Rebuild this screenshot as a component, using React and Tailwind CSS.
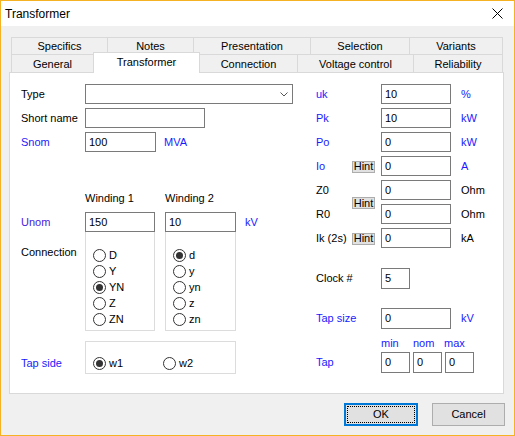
import React from 'react';

const BLUE = 'text-[#1a1aff]';

const Input = ({ value = '', className = '' }) => (
  <div className={`h-[20px] border border-[#7a7a7a] bg-white pl-[3px] flex items-center text-black ${className}`}>
    {value}
  </div>
);

const Radio = ({ label, checked = false, className = '' }) => (
  <div className={`flex items-center h-[16px] ${className}`}>
    <span className="w-[13px] h-[13px] rounded-full border border-[#333] bg-white flex items-center justify-center">
      {checked && <span className="w-[7px] h-[7px] rounded-full bg-[#333]" />}
    </span>
    <span className="ml-[3px]">{label}</span>
  </div>
);

const Hint = () => (
  <div className="w-[23px] h-[12px] bg-[#e1e1e1] border border-[#adadad] flex items-center justify-center text-[11px] leading-none text-black">
    Hint
  </div>
);

const RadioBox = ({ items, checked, className = '' }) => (
  <div className={`h-[99px] border-x border-b border-[#dcdcdc] pt-[15px] pl-[7px] ${className}`}>
    {items.map((it) => (
      <Radio key={it} label={it} checked={it === checked} />
    ))}
  </div>
);

const Tab = ({ label, className = '' }) => (
  <div className={`flex items-center justify-center border-t border-l border-[#d9d9d9] bg-[#f0f0f0] ${className}`}>
    {label}
  </div>
);

const Row = ({ label, labelClass = '', labelW = 'w-[65px]', className = '', children }) => (
  <div className={`flex items-center h-[20px] ${className}`}>
    <span className={`${labelW} ${labelClass}`}>{label}</span>
    {children}
  </div>
);

export default function App() {
  return (
    <div className="w-[515px] h-[436px] border border-[#f5b324] bg-[#f0f0f0] font-['Liberation_Sans',Arial,sans-serif] text-[11px] text-black overflow-hidden">
      {/* title bar */}
      <div className="h-[25px] bg-white flex items-center justify-between pl-[4px] pr-[11px]">
        <span className="text-[12px]">Transformer</span>
        <svg width="11" height="11" viewBox="0 0 11 11">
          <path d="M0.5 0.5 L10.5 10.5 M10.5 0.5 L0.5 10.5" stroke="#000" strokeWidth="1" />
        </svg>
      </div>

      {/* tabs */}
      <div className="ml-[10px] mt-[11px]">
        <div className="flex h-[17px]">
          <Tab label="Specifics" className="w-[96px]" />
          <Tab label="Notes" className="w-[86px]" />
          <Tab label="Presentation" className="w-[117px]" />
          <Tab label="Selection" className="w-[99px]" />
          <Tab label="Variants" className="w-[94px] border-r" />
        </div>
        <div className="flex items-end h-[21px] -mt-[2px] -mb-[1px] relative z-10">
          <Tab label="General" className="w-[82px] h-[19px] border-b pt-[1px]" />
          <div className="w-[107px] h-[21px] border-x border-t border-[#d9d9d9] bg-white flex items-center justify-center pb-[1px]">
            Transformer
          </div>
          <div className="w-[97px] h-[19px] flex items-center justify-center border-t border-b border-[#d9d9d9] pt-[1px]">
            Connection
          </div>
          <Tab label="Voltage control" className="w-[116px] h-[19px] border-b pt-[1px]" />
          <Tab label="Reliability" className="w-[90px] h-[19px] border-b border-r pt-[1px]" />
        </div>
      </div>

      {/* panel */}
      <div className="ml-[8px] w-[495px] h-[322px] border border-[#d9d9d9] bg-white pt-[11px] pl-[11px] flex">
        {/* left column */}
        <div className="w-[272px] flex flex-col">
          <Row label="Type" labelW="w-[64px]">
            <div className="w-[208px] h-[20px] border border-[#7a7a7a] bg-white flex items-center justify-end pr-[4px]">
              <svg width="8" height="5" viewBox="0 0 8 5">
                <path d="M0.5 0.5 L4 4 L7.5 0.5" stroke="#555" strokeWidth="1" fill="none" />
              </svg>
            </div>
          </Row>
          <Row label="Short name" labelW="w-[64px]" className="mt-[4px]">
            <Input className="w-[120px]" />
          </Row>
          <Row label="Snom" labelW="w-[64px]" labelClass={BLUE} className="mt-[4px]">
            <Input value="100" className="w-[71px]" />
            <span className={`ml-[8px] ${BLUE}`}>MVA</span>
          </Row>

          <div className="flex h-[14px] items-center mt-[39px]">
            <span className="ml-[64px] w-[80px]">Winding 1</span>
            <span>Winding 2</span>
          </div>
          <Row label="Unom" labelW="w-[64px]" labelClass="text-[#4a1ae0]" className="mt-[7px]">
            <Input value="150" className="w-[70px]" />
            <Input value="10" className="w-[71px] ml-[10px]" />
            <span className={`ml-[9px] ${BLUE}`}>kV</span>
          </Row>
          <div className="flex">
            <span className="w-[64px] mt-[13px] leading-[14px]">Connection</span>
            <RadioBox items={['D', 'Y', 'YN', 'Z', 'ZN']} checked="YN" className="w-[70px]" />
            <RadioBox items={['d', 'y', 'yn', 'z', 'zn']} checked="d" className="w-[71px] ml-[10px]" />
          </div>

          <div className="flex items-end mt-[10px]">
            <span className={`w-[64px] h-[16px] leading-[16px] mb-[3px] ${BLUE}`}>Tap side</span>
            <div className="w-[151px] h-[33px] border border-[#dcdcdc] flex items-end pb-[2px] pl-[7px]">
              <Radio label="w1" checked className="w-[70px]" />
              <Radio label="w2" />
            </div>
          </div>
        </div>

        {/* right column */}
        <div className="ml-[23px] w-[180px] flex flex-col">
          <Row label="uk" labelClass={BLUE}>
            <Input value="10" className="w-[70px]" />
            <span className={`ml-[10px] ${BLUE}`}>%</span>
          </Row>
          <Row label="Pk" labelClass={BLUE} className="mt-[4px]">
            <Input value="10" className="w-[70px]" />
            <span className={`ml-[10px] ${BLUE}`}>kW</span>
          </Row>
          <Row label="Po" labelClass={BLUE} className="mt-[4px]">
            <Input value="0" className="w-[70px]" />
            <span className={`ml-[10px] ${BLUE}`}>kW</span>
          </Row>
          <Row label="Io" labelW="w-[36px]" labelClass={BLUE} className="mt-[4px]">
            <div className="w-[29px] pt-[1px]"><Hint /></div>
            <Input value="0" className="w-[70px]" />
            <span className={`ml-[10px] ${BLUE}`}>A</span>
          </Row>
          <div className="flex mt-[4px]">
            <div className="w-[36px] flex flex-col">
              <span className="h-[20px] flex items-center">Z0</span>
              <span className="h-[20px] mt-[4px] flex items-center">R0</span>
            </div>
            <div className="w-[29px] flex items-center pt-[2px]"><Hint /></div>
            <div className="flex flex-col">
              <Input value="0" className="w-[70px]" />
              <Input value="0" className="w-[70px] mt-[4px]" />
            </div>
            <div className="ml-[10px] flex flex-col">
              <span className="h-[20px] flex items-center">Ohm</span>
              <span className="h-[20px] mt-[4px] flex items-center">Ohm</span>
            </div>
          </div>
          <Row label="Ik (2s)" labelW="w-[36px]" className="mt-[4px]">
            <div className="w-[29px] pt-[1px]"><Hint /></div>
            <Input value="0" className="w-[70px]" />
            <span className="ml-[10px]">kA</span>
          </Row>

          <Row label="Clock #" className="mt-[20px] h-[21px]">
            <Input value="5" className="w-[29px] h-[21px]" />
          </Row>
          <Row label="Tap size" labelClass={BLUE} className="mt-[19px] h-[21px]">
            <Input value="0" className="w-[70px] h-[21px]" />
            <span className={`ml-[10px] ${BLUE}`}>kV</span>
          </Row>
          <div className={`flex h-[14px] items-center mt-[7px] ${BLUE}`}>
            <span className="ml-[65px] w-[32px]">min</span>
            <span className="w-[31px]">nom</span>
            <span>max</span>
          </div>
          <Row label="Tap" labelClass={BLUE} className="mt-[2px] h-[21px]">
            <div className="flex gap-[3px]">
              <Input value="0" className="w-[29px] h-[21px]" />
              <Input value="0" className="w-[29px] h-[21px]" />
              <Input value="0" className="w-[29px] h-[21px]" />
            </div>
          </Row>
        </div>
      </div>

      {/* buttons */}
      <div className="flex justify-end gap-[14px] pr-[9px] mt-[9px]">
        <button className="w-[74px] h-[23px] border-2 border-[#0078d7] bg-[#e1e1e1] p-[1px]">
          <div className="w-full h-full border border-dotted border-black flex items-center justify-center">
            OK
          </div>
        </button>
        <button className="w-[73px] h-[23px] border border-[#adadad] bg-[#e1e1e1] flex items-center justify-center">
          Cancel
        </button>
      </div>
    </div>
  );
}
